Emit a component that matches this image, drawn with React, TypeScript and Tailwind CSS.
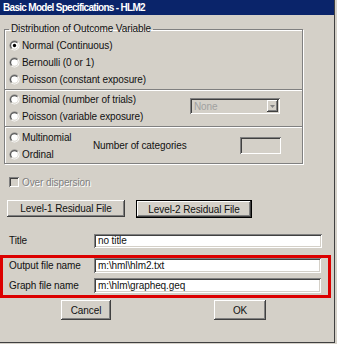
import React from "react";

const raised =
    "bg-[#d4d0c8] shadow-[inset_-1px_-1px_#404040,inset_1px_1px_#ffffff,inset_-2px_-2px_#808080,inset_2px_2px_#d4d0c8]";
const sunken =
    "shadow-[inset_1px_1px_#808080,inset_-1px_-1px_#ffffff,inset_2px_2px_#404040,inset_-2px_-2px_#d4d0c8]";

function Radio({ checked = false }: { checked?: boolean }) {
    return (
        <svg width="11" height="11" viewBox="0 0 12 12" className="shrink-0">
            <defs>
                <linearGradient id="ring" x1="0" y1="0" x2="1" y2="1">
                    <stop offset="0.45" stopColor="#808080" />
                    <stop offset="0.55" stopColor="#ffffff" />
                </linearGradient>
                <linearGradient id="ring2" x1="0" y1="0" x2="1" y2="1">
                    <stop offset="0.45" stopColor="#404040" />
                    <stop offset="0.55" stopColor="#d4d0c8" />
                </linearGradient>
            </defs>
            <circle cx="6" cy="6" r="5.5" fill="url(#ring)" />
            <circle cx="6" cy="6" r="4.5" fill="url(#ring2)" />
            <circle cx="6" cy="6" r="3.6" fill="#ffffff" />
            {checked && <circle cx="6" cy="6" r="1.8" fill="#000000" />}
        </svg>
    );
}

function RadioRow({ label, checked }: { label: string; checked?: boolean }) {
    return (
        <div className="h-[17px] flex items-center gap-[2px]">
            <Radio checked={checked} />
            <span>{label}</span>
        </div>
    );
}

function Separator() {
    return <div className="h-[2px] border-t border-[#808080] border-b border-b-white" />;
}

function Field({ label, value }: { label: string; value: string }) {
    return (
        <div className="flex items-center h-[15px]">
            <span className="w-[85px]">{label}</span>
            <div className={`w-[227px] h-[15px] bg-white ${sunken} pl-[4px] flex items-center`}>
                {value}
            </div>
        </div>
    );
}

export default function App() {
    return (
        <div className="w-[337px] h-[344px] bg-[#d4d0c8] overflow-hidden text-[#111] text-[10px] tracking-[-0.1px] font-['Liberation_Sans',Arial,sans-serif]">
            <div className="w-[335px] h-[343px] border-r border-b border-[#404040] flex flex-col">
                {/* Title bar */}
                <div className="h-[15px] bg-[#0a246a] text-white font-bold text-[10px] tracking-[-0.7px] pl-[3px] flex items-center">
                    Basic Model Specifications - HLM2
                </div>

                {/* Distribution group */}
                <fieldset className="mt-[8px] ml-[4px] w-[299px] border border-[#808080] shadow-[inset_1px_1px_0_#ffffff,1px_1px_0_#ffffff]">
                    <legend className="ml-[4px] px-[2px] leading-[12px]">Distribution of Outcome Variable</legend>

                    <div className="h-[54px] pl-[4px] pt-[2px]">
                        <RadioRow label="Normal (Continuous)" checked />
                        <RadioRow label="Bernoulli  (0 or 1)" />
                        <RadioRow label="Poisson (constant exposure)" />
                    </div>
                    <Separator />

                    <div className="h-[35px] pl-[4px] flex items-start">
                        <div className="w-[181px]">
                            <RadioRow label="Binomial (number of trials)" />
                            <RadioRow label="Poisson (variable exposure)" />
                        </div>
                        <div className={`mt-[7px] w-[90px] h-[16px] ${sunken} bg-[#d4d0c8] flex items-center justify-between pl-[4px] pr-[2px]`}>
                            <span className="text-[#a0a0a0]">None</span>
                            <div className={`w-[11px] h-[12px] ${raised} flex items-center justify-center`}>
                                <svg width="5" height="3" viewBox="0 0 5 3">
                                    <path d="M0 0h5L2.5 3z" fill="#808080" />
                                </svg>
                            </div>
                        </div>
                    </div>
                    <Separator />

                    <div className="h-[35px] pl-[4px] flex items-center">
                        <div className="w-[84px]">
                            <RadioRow label="Multinomial" />
                            <RadioRow label="Ordinal" />
                        </div>
                        <span className="w-[147px]">Number of categories</span>
                        <div className={`w-[41px] h-[17px] ${sunken} bg-[#d4d0c8]`} />
                    </div>
                </fieldset>

                {/* Over dispersion */}
                <div className="mt-[11px] ml-[9px] h-[14px] flex items-center gap-[3px]">
                    <div className={`w-[10px] h-[10px] ${sunken} bg-[#d4d0c8]`} />
                    <span className="text-[#808080] [text-shadow:1px_1px_0_#ffffff]">Over dispersion</span>
                </div>

                {/* Residual buttons */}
                <div className="mt-[11px] ml-[7px] flex gap-[11px]">
                    <button className={`w-[118px] h-[17px] ${raised}`}>Level-1 Residual File</button>
                    <button className={`w-[116px] h-[18px] border border-black ${raised}`}>Level-2 Residual File</button>
                </div>

                {/* Title */}
                <div className="mt-[15px] ml-[9px] flex items-center">
                    <span className="w-[85px]">Title</span>
                    <div className={`w-[228px] h-[14px] bg-white ${sunken} pl-[4px] flex items-center`}>no title</div>
                </div>

                {/* Highlighted file names */}
                <div className="mt-[7px] w-[331px] h-[43px] border-[3px] border-[#dc0000] pl-[6px] flex flex-col gap-[5px]">
                    <Field label="Output file name" value="m:\hml\hlm2.txt" />
                    <Field label="Graph file name" value="m:\hlm\grapheq.geq" />
                </div>

                {/* Cancel / OK */}
                <div className="mt-[2px] flex">
                    <button className={`ml-[61px] w-[50px] h-[20px] ${raised}`}>Cancel</button>
                    <button className={`ml-[103px] w-[52px] h-[20px] ${raised}`}>OK</button>
                </div>
            </div>
        </div>
    );
}
